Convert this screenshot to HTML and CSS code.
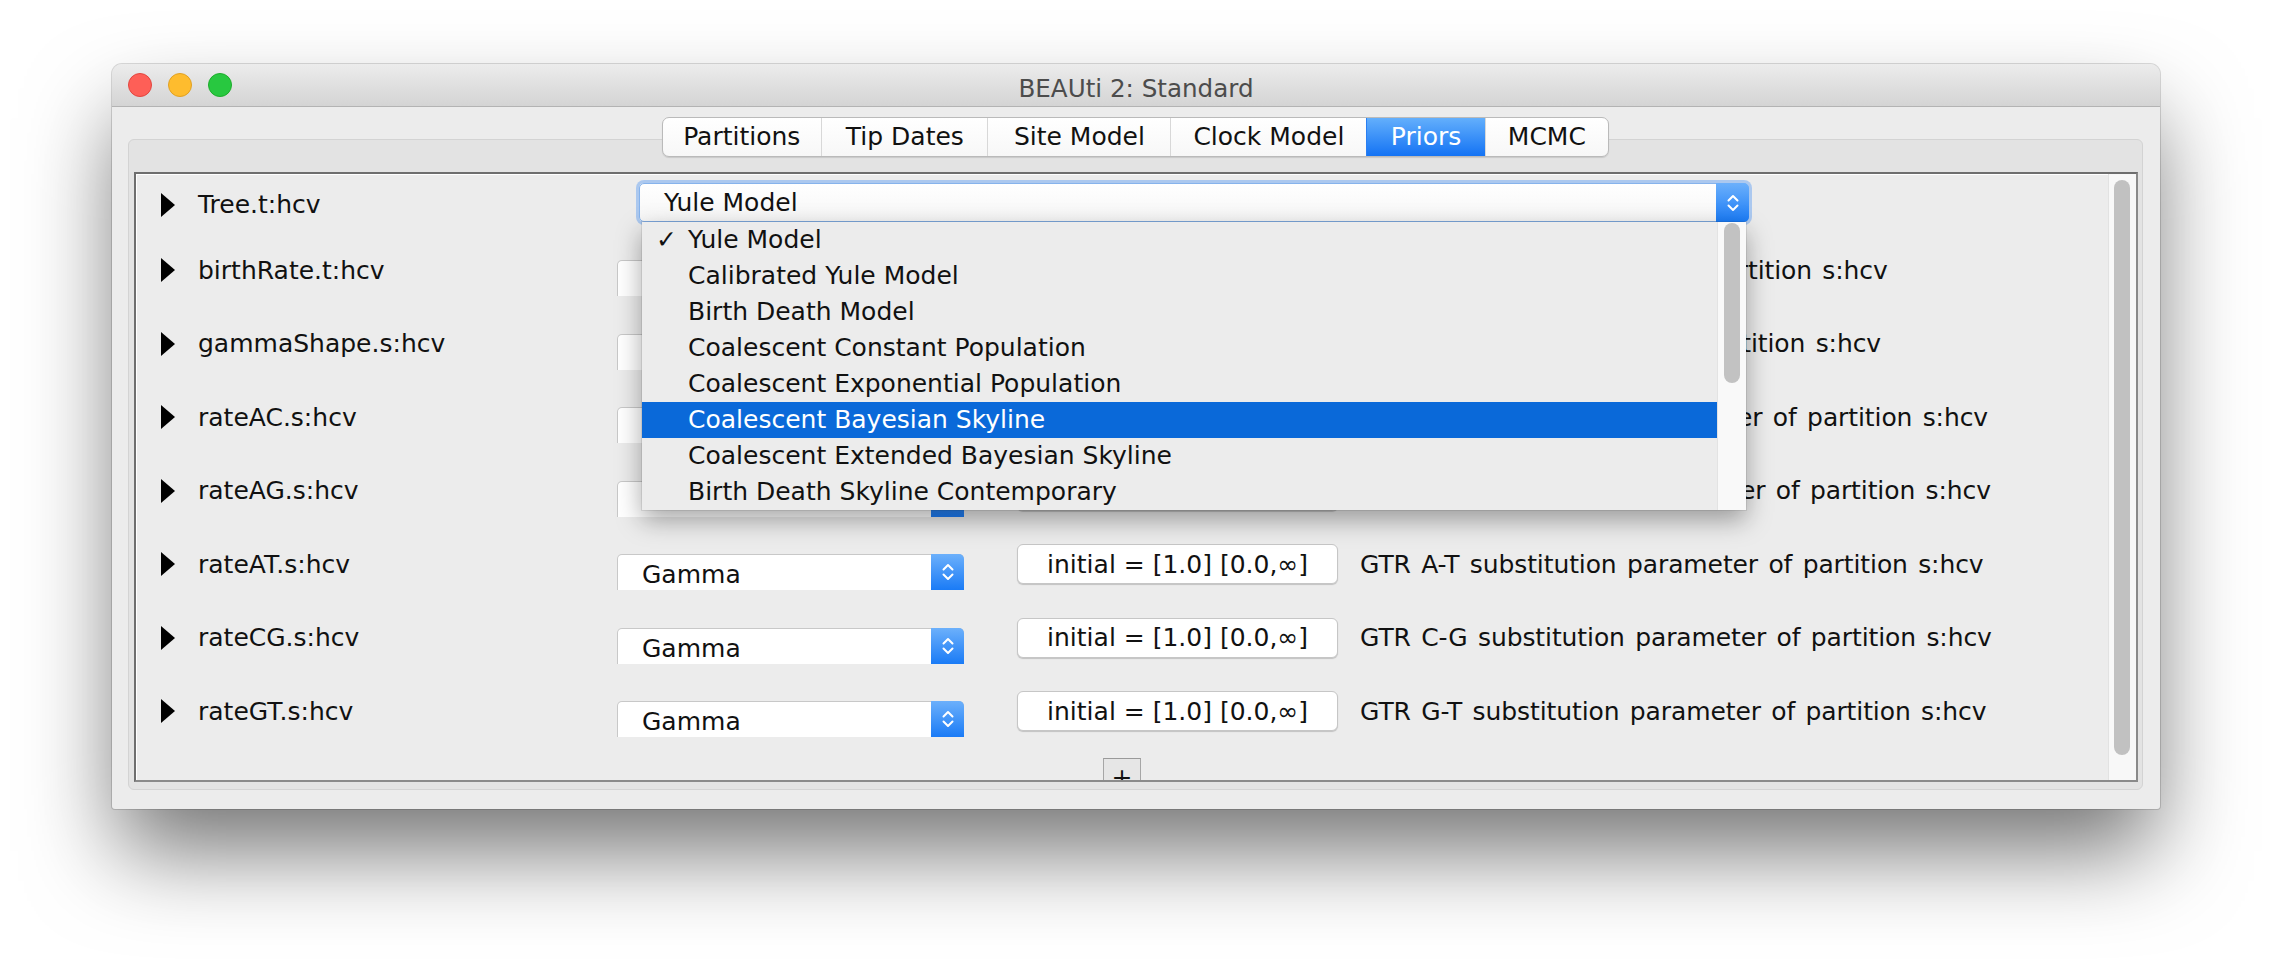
FILE: index.html
```html
<!DOCTYPE html>
<html>
<head>
<meta charset="utf-8">
<title>BEAUti 2: Standard</title>
<link rel="stylesheet" href="styles.css">
</head>
<body>
<div class="window">
  <div class="titlebar">
    <div class="lights">
      <span class="light red"></span>
      <span class="light yellow"></span>
      <span class="light green"></span>
    </div>
    <div class="title">BEAUti 2: Standard</div>
    <div></div>
  </div>
  <div class="body">
    <div class="tabs">
      <div class="tab">Partitions</div>
      <div class="tab tab-tip">Tip Dates</div>
      <div class="tab tab-site">Site Model</div>
      <div class="tab">Clock Model</div>
      <div class="tab active">Priors</div>
      <div class="tab">MCMC</div>
    </div>
    <div class="pane">
      <div class="content">
        <div class="rows">
          <div class="row row-first">
            <span class="tri"></span>
            <span class="label">Tree.t:hcv</span>
            <div class="combo combo-wide">
              <span class="combo-text">Yule Model</span>
              <span class="combo-btn"><svg width="14" height="22" viewBox="0 0 14 22"><path d="M2.5 8.5 L7 4 L11.5 8.5 M2.5 13.5 L7 18 L11.5 13.5" stroke="#fff" stroke-width="2" fill="none" stroke-linecap="round" stroke-linejoin="round"/></svg></span>
              <div class="popup">
                <div class="items">
                  <div class="item"><span class="check">✓</span>Yule Model</div>
                  <div class="item"><span class="check"></span>Calibrated Yule Model</div>
                  <div class="item"><span class="check"></span>Birth Death Model</div>
                  <div class="item"><span class="check"></span>Coalescent Constant Population</div>
                  <div class="item"><span class="check"></span>Coalescent Exponential Population</div>
                  <div class="item sel"><span class="check"></span>Coalescent Bayesian Skyline</div>
                  <div class="item"><span class="check"></span>Coalescent Extended Bayesian Skyline</div>
                  <div class="item"><span class="check"></span>Birth Death Skyline Contemporary</div>
                </div>
                <div class="pscroll"><div class="pthumb"></div></div>
              </div>
            </div>
          </div>

          <div class="row">
            <span class="tri"></span>
            <span class="label">birthRate.t:hcv</span>
            <div class="combo"><span class="combo-text">Uniform</span><span class="combo-btn"><svg width="14" height="22" viewBox="0 0 14 22"><path d="M2.5 8.5 L7 4 L11.5 8.5 M2.5 13.5 L7 18 L11.5 13.5" stroke="#fff" stroke-width="2" fill="none" stroke-linecap="round" stroke-linejoin="round"/></svg></span></div>
            <div class="initial">initial = [1.0] [0.0,∞]</div>
            <span class="desc">Yule birth rate (lambda) of partition s:hcv</span>
          </div>

          <div class="row">
            <span class="tri"></span>
            <span class="label">gammaShape.s:hcv</span>
            <div class="combo"><span class="combo-text">Exponential</span><span class="combo-btn"><svg width="14" height="22" viewBox="0 0 14 22"><path d="M2.5 8.5 L7 4 L11.5 8.5 M2.5 13.5 L7 18 L11.5 13.5" stroke="#fff" stroke-width="2" fill="none" stroke-linecap="round" stroke-linejoin="round"/></svg></span></div>
            <div class="initial">initial = [1.0] [0.0,∞]</div>
            <span class="desc">alpha shape parameter of partition s:hcv</span>
          </div>

          <div class="row">
            <span class="tri"></span>
            <span class="label">rateAC.s:hcv</span>
            <div class="combo"><span class="combo-text">Gamma</span><span class="combo-btn"><svg width="14" height="22" viewBox="0 0 14 22"><path d="M2.5 8.5 L7 4 L11.5 8.5 M2.5 13.5 L7 18 L11.5 13.5" stroke="#fff" stroke-width="2" fill="none" stroke-linecap="round" stroke-linejoin="round"/></svg></span></div>
            <div class="initial">initial = [1.0] [0.0,∞]</div>
            <span class="desc">GTR A-C substitution parameter of partition s:hcv</span>
          </div>

          <div class="row">
            <span class="tri"></span>
            <span class="label">rateAG.s:hcv</span>
            <div class="combo"><span class="combo-text">Gamma</span><span class="combo-btn"><svg width="14" height="22" viewBox="0 0 14 22"><path d="M2.5 8.5 L7 4 L11.5 8.5 M2.5 13.5 L7 18 L11.5 13.5" stroke="#fff" stroke-width="2" fill="none" stroke-linecap="round" stroke-linejoin="round"/></svg></span></div>
            <div class="initial">initial = [1.0] [0.0,∞]</div>
            <span class="desc">GTR A-G substitution parameter of partition s:hcv</span>
          </div>

          <div class="row">
            <span class="tri"></span>
            <span class="label">rateAT.s:hcv</span>
            <div class="combo"><span class="combo-text">Gamma</span><span class="combo-btn"><svg width="14" height="22" viewBox="0 0 14 22"><path d="M2.5 8.5 L7 4 L11.5 8.5 M2.5 13.5 L7 18 L11.5 13.5" stroke="#fff" stroke-width="2" fill="none" stroke-linecap="round" stroke-linejoin="round"/></svg></span></div>
            <div class="initial">initial = [1.0] [0.0,∞]</div>
            <span class="desc">GTR A-T substitution parameter of partition s:hcv</span>
          </div>

          <div class="row">
            <span class="tri"></span>
            <span class="label">rateCG.s:hcv</span>
            <div class="combo"><span class="combo-text">Gamma</span><span class="combo-btn"><svg width="14" height="22" viewBox="0 0 14 22"><path d="M2.5 8.5 L7 4 L11.5 8.5 M2.5 13.5 L7 18 L11.5 13.5" stroke="#fff" stroke-width="2" fill="none" stroke-linecap="round" stroke-linejoin="round"/></svg></span></div>
            <div class="initial">initial = [1.0] [0.0,∞]</div>
            <span class="desc">GTR C-G substitution parameter of partition s:hcv</span>
          </div>

          <div class="row">
            <span class="tri"></span>
            <span class="label">rateGT.s:hcv</span>
            <div class="combo"><span class="combo-text">Gamma</span><span class="combo-btn"><svg width="14" height="22" viewBox="0 0 14 22"><path d="M2.5 8.5 L7 4 L11.5 8.5 M2.5 13.5 L7 18 L11.5 13.5" stroke="#fff" stroke-width="2" fill="none" stroke-linecap="round" stroke-linejoin="round"/></svg></span></div>
            <div class="initial">initial = [1.0] [0.0,∞]</div>
            <span class="desc">GTR G-T substitution parameter of partition s:hcv</span>
          </div>

          <div class="plus-row"><div class="plus">+</div></div>
        </div>
        <div class="vscroll"><div class="vthumb"></div></div>
      </div>
    </div>
  </div>
</div>
</body>
</html>
```

FILE: styles.css
```css
html, body {
  margin: 0;
  padding: 0;
}
body {
  background: #ffffff;
  font-family: "DejaVu Sans", "Liberation Sans", sans-serif;
  color: #111;
  width: 2272px;
  height: 970px;
  overflow: hidden;
}
.window {
  margin: 64px 0 0 112px;
  width: 2048px;
  height: 745px;
  background: #ececec;
  border-radius: 10px 10px 3px 3px;
  box-shadow: 0 0 0 1px rgba(0,0,0,0.14), 0 48px 90px -6px rgba(0,0,0,0.55);
  display: flex;
  flex-direction: column;
}
.titlebar {
  height: 43px;
  box-sizing: border-box;
  border-bottom: 1px solid #b3b3b3;
  border-radius: 10px 10px 0 0;
  background: linear-gradient(#ececec, #d4d4d4);
  display: grid;
  grid-template-columns: 1fr auto 1fr;
  align-items: center;
  padding: 0 16px;
}
.lights {
  display: flex;
  gap: 16px;
}
.light {
  width: 24px;
  height: 24px;
  border-radius: 50%;
  box-sizing: border-box;
}
.red { background: #fe5f57; border: 1px solid #e2463f; }
.yellow { background: #febc2e; border: 1px solid #e1a123; }
.green { background: #28c840; border: 1px solid #1dad2b; }
.title {
  font-size: 24.6px;
  color: #4c4c4c;
  margin-top: 6px;
}
.body {
  flex: 1;
  padding: 10px 17px 0 16px;
  display: flex;
  flex-direction: column;
}
.tabs {
  align-self: center;
  display: flex;
  height: 40px;
  box-sizing: border-box;
  position: relative;
  z-index: 2;
  border: 1px solid #bababa;
  border-radius: 7px;
  background: linear-gradient(#ffffff, #f7f7f7);
  box-shadow: 0 1px 1px rgba(0,0,0,0.12);
  overflow: hidden;
}
.tab {
  padding: 0 22px;
  font-size: 25px;
  line-height: 38px;
  border-left: 1px solid #d8d8d8;
  color: #111;
}
.tab:first-child {
  border-left: none;
  padding: 0 21px 0 20px;
}
.tab-tip {
  padding: 0 23.5px;
}
.tab-site {
  padding: 0 25.5px;
}
.tab.active {
  background: linear-gradient(#63affc, #1473f4);
  color: #fff;
  border-left-color: #2a7ff2;
  padding: 0 23.5px;
}
.pane {
  margin-top: -18px;
  height: 651px;
  box-sizing: border-box;
  border: 1px solid #d3d3d3;
  border-radius: 6px;
  background: #e3e3e3;
  padding: 32px 4px 7px 5px;
}
.content {
  height: 610px;
  box-sizing: border-box;
  border: 2px solid #6e6e6e;
  border-right-color: #8a8a8a;
  border-bottom-color: #8a8a8a;
  background: #ececec;
  box-shadow: inset 1px 1px 0 #ffffff;
  display: flex;
  overflow: hidden;
}
.rows {
  flex: 1;
  padding-top: 2px;
}
.row {
  display: flex;
  align-items: center;
  height: 73.5px;
  padding-left: 25px;
  font-size: 25px;
}
.row-first {
  height: 57.25px;
  position: relative;
  z-index: 5;
}
.tri {
  width: 0;
  height: 0;
  border-left: 14px solid #000;
  border-top: 12px solid transparent;
  border-bottom: 12px solid transparent;
  margin-right: 23px;
}
.label {
  width: 419px;
  white-space: nowrap;
}
.combo {
  width: 347px;
  height: 36px;
  margin-top: 16px;
  box-sizing: border-box;
  background: #fff;
  border: 1px solid #c8c8c8;
  border-bottom: none;
  border-radius: 5px 5px 0 0;
  display: flex;
  position: relative;
  flex-shrink: 0;
}
.combo-text {
  flex: 1;
  padding: 5px 0 0 24px;
  white-space: nowrap;
  overflow: hidden;
}
.combo-btn {
  width: 33px;
  margin: -1px -1px 0 0;
  background: linear-gradient(#6cb0fb, #1a7bf6);
  border-radius: 0 5px 0 0;
  display: flex;
  align-items: center;
  justify-content: center;
}
.combo-wide {
  width: 1110px;
  height: 39px;
  margin-top: 0;
  margin-bottom: 4px;
  margin-left: 22px;
  border: 1px solid #86b3ec;
  border-radius: 5px;
  box-shadow: 0 0 0 3px rgba(118, 172, 242, 0.55);
  background: linear-gradient(#ffffff, #f6f6f6);
}
.combo-wide .combo-text {
  padding: 0 0 0 24px;
  line-height: 37px;
}
.combo-wide .combo-btn {
  margin: -1px -1px -1px 0;
  border-radius: 0 5px 5px 0;
}
.popup {
  position: absolute;
  top: calc(100% + 1px);
  left: 2px;
  width: 1104px;
  height: 288px;
  background: #ececec;
  box-shadow: 0 0 0 1px rgba(0,0,0,0.08), 0 10px 24px rgba(0,0,0,0.35);
  display: flex;
  z-index: 10;
}
.items {
  flex: 1;
}
.item {
  height: 36px;
  line-height: 36px;
  padding-left: 14px;
  white-space: nowrap;
  color: #111;
}
.item.sel {
  background: #0a69d9;
  color: #fff;
}
.check {
  display: inline-block;
  width: 32px;
}
.pscroll {
  width: 29px;
  box-sizing: border-box;
  background: #f9f9f9;
  border-left: 1px solid #e3e3e3;
  padding: 1px 6px 0 6px;
}
.pthumb {
  height: 160px;
  border-radius: 8px;
  background: #c2c2c2;
}
.initial {
  margin-left: 53px;
  width: 321px;
  height: 40px;
  box-sizing: border-box;
  background: #fff;
  border: 1px solid #c6c6c6;
  border-radius: 6px;
  box-shadow: 0 1px 1px rgba(0,0,0,0.18);
  display: flex;
  align-items: center;
  justify-content: center;
  white-space: nowrap;
  flex-shrink: 0;
}
.desc {
  margin-left: 22px;
  white-space: nowrap;
  font-size: 25px;
  letter-spacing: -0.1px;
  word-spacing: 2.5px;
}
.plus-row {
  display: flex;
  justify-content: center;
  padding-top: 10px;
}
.plus {
  width: 38px;
  height: 40px;
  box-sizing: border-box;
  border: 1px solid #a6a6a6;
  border-top-color: #9a9a9a;
  background: #e6e6e6;
  font-size: 25px;
  line-height: 38px;
  text-align: center;
}
.vscroll {
  width: 28px;
  box-sizing: border-box;
  background: #f8f8f8;
  border-left: 1px solid #e2e2e2;
  padding: 6px 6px 0 5px;
}
.vthumb {
  height: 575px;
  border-radius: 8px;
  background: #c1c1c1;
}
```
